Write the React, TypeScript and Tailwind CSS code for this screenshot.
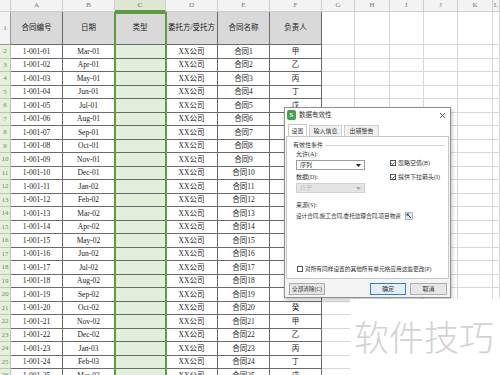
const months = ["Jan", "Feb", "Mar", "Apr", "May", "Jun", "Jul", "Aug", "Sep", "Oct", "Nov", "Dec"];
const stems = ["甲", "乙", "丙", "丁", "戊", "己", "庚", "辛", "壬", "癸"];
const letters = ["A", "B", "C", "D", "E", "F", "G", "H", "I", "J", "K", "L"];
const widths = ["w-[52px]", "w-[52px]", "w-[51px]", "w-[52px]", "w-[52px]", "w-[52px]", "w-[33px]", "w-[35px]", "w-[34px]", "w-[34px]", "w-[35px]", "flex-1"];

const pad = (n: number) => (n < 10 ? "0" + n : "" + n);

// rows 7-20 of column F sit fully under the dialog
const rows = Array.from({ length: 25 }, (_, k) => {
  const i = k + 1;
  const m = 2 + k;
  return {
    num: i + 1,
    cells: [
      `1-001-${pad(i)}`,
      `${months[m % 12]}-${pad(1 + Math.floor(m / 12))}`,
      "",
      "XX公司",
      `合同${i}`,
      k >= 5 && k <= 18 ? "" : stems[k % 10],
    ],
  };
});

const heads = ["合同编号", "日期", "类型", "委托方/受托方", "合同名称", "负责人"];

function Arrow({ color = "#222" }: { color?: string }) {
  return (
    <svg width="5" height="3" viewBox="0 0 5 3">
      <path d="M0 0h5L2.5 3z" fill={color} />
    </svg>
  );
}

function Check({ checked }: { checked?: boolean }) {
  return (
    <span className="w-[6px] h-[6px] border border-[#555] bg-white flex items-center justify-center shrink-0">
      {checked && (
        <svg width="5" height="5" viewBox="0 0 5 5">
          <path d="M0.6 2.6l1.3 1.3L4.4 1" fill="none" stroke="#222" strokeWidth="0.9" />
        </svg>
      )}
    </span>
  );
}

function Dialog() {
  return (
    <div className="absolute left-[284px] top-[107px] w-[167px] h-[191px] border border-[#8f8f8f] bg-[#f4f4f4] shadow-[1px_2px_4px_rgba(0,0,0,0.25)] flex flex-col text-[6px] leading-[8px] text-[#333]">
      {/* title */}
      <div className="h-[14px] bg-white flex items-center pl-[2px] pr-[4px]">
        <span className="w-[9px] h-[10px] rounded-[2px] bg-[#3fa34d] text-white text-[7px] leading-[10px] font-bold flex justify-center">S</span>
        <span className="ml-[3px] text-[6.5px]">数据有效性</span>
        <svg className="ml-auto" width="7" height="7" viewBox="0 0 7 7">
          <path d="M1 1l5 5M6 1L1 6" stroke="#444" strokeWidth="0.9" />
        </svg>
      </div>

      {/* tabs */}
      <div className="h-[14px] flex items-end pl-[3px] gap-[2px] bg-white">
        <div className="w-[19px] h-[12px] bg-white border border-b-0 border-[#c8c8c8] flex items-center justify-center">设置</div>
        <div className="w-[33px] h-[11px] bg-[#f0f0f0] border border-b-0 border-[#d0d0d0] flex items-center justify-center">输入信息</div>
        <div className="w-[35px] h-[11px] bg-[#f0f0f0] border border-b-0 border-[#d0d0d0] flex items-center justify-center">出错警告</div>
      </div>

      {/* panel */}
      <div className="mx-[1px] h-[143px] bg-white border border-[#c8c8c8] flex flex-col">
        <div className="mt-[4px] pl-[6px] pr-[3px] h-[8px] flex items-center gap-[2px]">
          <span>有效性条件</span>
          <span className="flex-1 h-px bg-[#d6d6d6]" />
        </div>

        <div className="flex">
          <div className="ml-[9px] w-[69px] flex flex-col">
            <span className="mt-[1px] h-[8px]">允许(A):</span>
            <div className="mt-[2px] h-[10px] border border-[#9c9c9c] bg-white flex items-center px-[3px]">
              <span>序列</span>
              <span className="ml-auto"><Arrow /></span>
            </div>
            <span className="mt-[3px] h-[8px]">数据(D):</span>
            <div className="mt-[2px] h-[10px] border border-[#cfcfcf] bg-[#e4e4e4] flex items-center px-[3px] text-[#b0b0b0]">
              <span>介于</span>
              <span className="ml-auto"><Arrow color="#aaa" /></span>
            </div>
          </div>
          <div className="ml-[25px] flex flex-col">
            <div className="mt-[10px] h-[8px] flex items-center gap-[2px]">
              <Check checked />
              <span>忽略空值(B)</span>
            </div>
            <div className="mt-[6px] h-[8px] flex items-center gap-[2px]">
              <Check checked />
              <span>提供下拉箭头(I)</span>
            </div>
          </div>
        </div>

        <span className="ml-[9px] mt-[8px] h-[8px]">来源(S):</span>
        <div className="ml-[9px] mt-[2px] h-[9px] flex items-center">
          <span className="w-[108px] overflow-hidden whitespace-nowrap text-[5.6px]">设计合同,施工合同,委托监理合同,项目物资</span>
          <svg className="ml-[1px]" width="8" height="8" viewBox="0 0 8 8">
            <rect x="0.5" y="0.5" width="7" height="7" fill="#dfe9f5" stroke="#7a8fa8" strokeWidth="0.6" />
            <path d="M2 2l4 4M2 2h2M2 2v2" stroke="#1f3b63" strokeWidth="0.9" fill="none" />
          </svg>
        </div>

        <div className="mt-auto mb-[5px] ml-[10px] h-[8px] flex items-center gap-[2px]">
          <Check />
          <span className="text-[5.7px]">对所有同样设置的其他所有单元格应用这些更改(P)</span>
        </div>
      </div>

      {/* buttons */}
      <div className="mt-[4px] flex items-center pl-[4px] pr-[3px]">
        <div className="w-[36px] h-[12px] border border-[#adadad] bg-[#e6e6e6] flex items-center justify-center text-[5.6px]">全部清除(C)</div>
        <div className="ml-auto w-[36px] h-[12px] border border-[#2f7fd0] bg-[#e3eefa] flex items-center justify-center">确定</div>
        <div className="ml-[4px] w-[37px] h-[12px] border border-[#adadad] bg-[#e6e6e6] flex items-center justify-center">取消</div>
      </div>
    </div>
  );
}

export default function App() {
  return (
    <div className="relative w-[500px] h-[375px] overflow-hidden bg-white text-[#222] font-['Liberation_Serif','Noto_Sans_CJK_SC',serif]">
      {/* column letters */}
      <div className="flex h-[12px] bg-[#f3f3f3]">
        <div className="w-[11px] border-r border-b border-[#cfcfcf]" />
        {letters.map((l, c) => (
          <div
            key={l}
            className={`${widths[c]} flex items-center justify-center text-[7px] border-r ${
              c === 2 ? "bg-[#dce8d2] text-[#4f7a38] border-b-2 border-b-[#5f9a47] border-r-[#cfcfcf]" : "text-[#777] border-b border-[#cfcfcf]"
            }`}
          >
            {l}
          </div>
        ))}
      </div>

      {/* row 1 */}
      <div className="flex h-[33px]">
        <div className="w-[11px] bg-[#f3f3f3] border-r border-b border-[#9a9a9a] flex items-center justify-center text-[7px] text-[#777]">1</div>
        {letters.map((l, c) => (
          <div
            key={l}
            className={`${widths[c]} flex items-center justify-center text-[7.5px] border-r border-b ${
              c < 6 ? "bg-[#d9d9d9] border-[#6a6a6a]" : "border-[#d8d8d8]"
            }`}
          >
            {c < 6 ? heads[c] : ""}
          </div>
        ))}
      </div>

      {/* data rows */}
      {rows.map((r) => (
        <div key={r.num} className="flex h-[13.5px]">
          <div className="w-[11px] bg-[#e6efdd] border-r border-b border-[#b9c9ad] flex items-center justify-center text-[7px] text-[#6d8d5d]">
            {r.num}
          </div>
          {letters.map((l, c) => (
            <div
              key={l}
              className={`${widths[c]} flex items-center justify-center text-[7.5px] border-r border-b ${
                c === 2 ? "bg-[#e2efda] border-[#6a6a6a]" : c < 6 ? "bg-white border-[#6a6a6a]" : "border-[#d8d8d8]"
              }`}
            >
              {c < 6 ? r.cells[c] : ""}
            </div>
          ))}
        </div>
      ))}

      {/* selection outline on column C */}
      <div className="absolute left-[114px] top-[12px] w-[53px] h-[400px] border-2 border-[#5f9a47] pointer-events-none" />

      <Dialog />

      {/* watermark */}
      <div className="absolute left-[350px] top-[299px] w-[150px] h-[76px] bg-white pl-[4px] pt-[19px]">
        <span className="text-[35px] leading-[35px] text-[#d2d2d2] font-['Noto_Sans_CJK_SC',sans-serif] font-light">软件技巧</span>
      </div>
    </div>
  );
}
